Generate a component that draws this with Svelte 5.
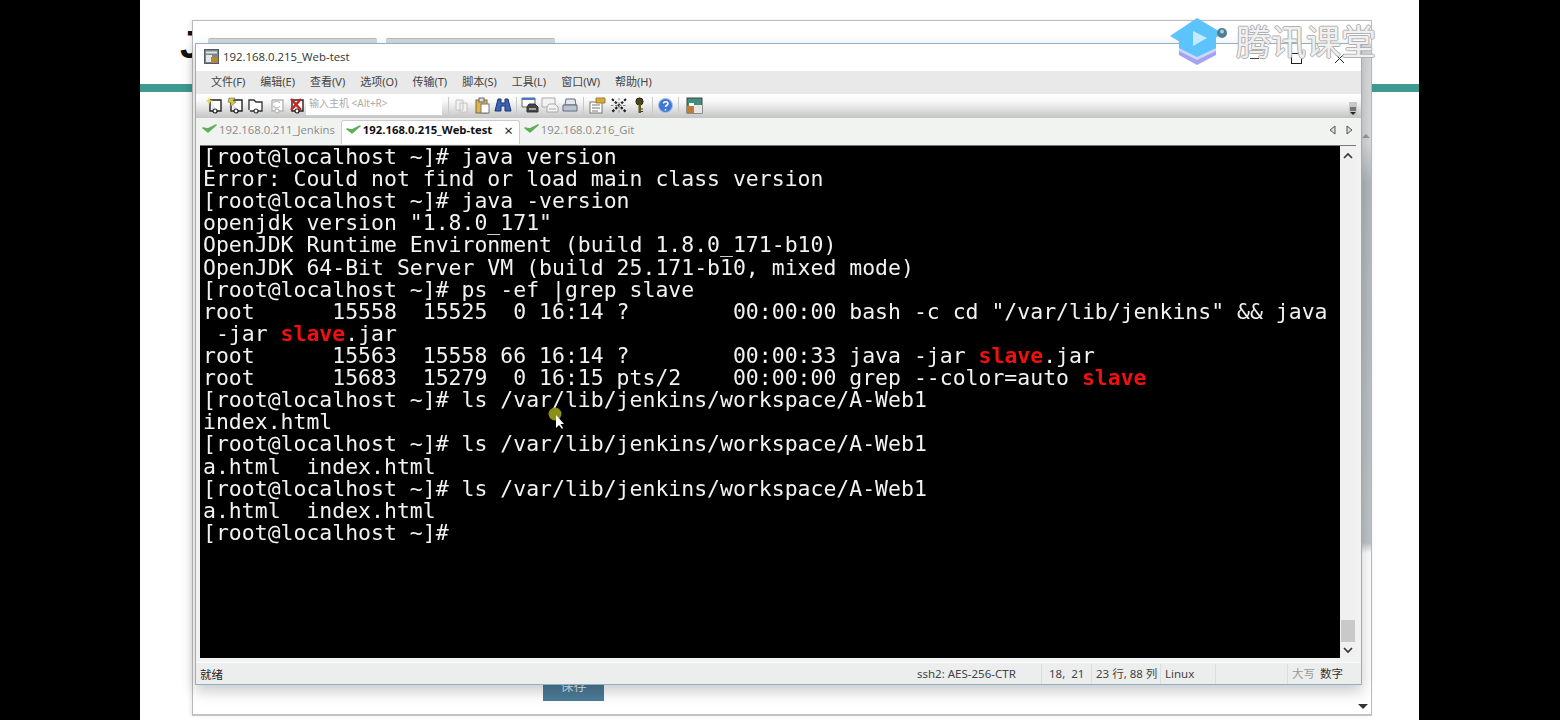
<script>
  const menus = ['文件(F)', '编辑(E)', '查看(V)', '选项(O)', '传输(T)', '脚本(S)', '工具(L)', '窗口(W)', '帮助(H)'];

  // terminal content, 'slave' is the grep match
  const lines = [
    ['[root@localhost ~]# java version'],
    ['Error: Could not find or load main class version'],
    ['[root@localhost ~]# java -version'],
    ['openjdk version "1.8.0_171"'],
    ['OpenJDK Runtime Environment (build 1.8.0_171-b10)'],
    ['OpenJDK 64-Bit Server VM (build 25.171-b10, mixed mode)'],
    ['[root@localhost ~]# ps -ef |grep slave'],
    ['root      15558  15525  0 16:14 ?        00:00:00 bash -c cd "/var/lib/jenkins" && java'],
    [' -jar ', 'slave', '.jar'],
    ['root      15563  15558 66 16:14 ?        00:00:33 java -jar ', 'slave', '.jar'],
    ['root      15683  15279  0 16:15 pts/2    00:00:00 grep --color=auto ', 'slave'],
    ['[root@localhost ~]# ls /var/lib/jenkins/workspace/A-Web1'],
    ['index.html'],
    ['[root@localhost ~]# ls /var/lib/jenkins/workspace/A-Web1'],
    ['a.html  index.html'],
    ['[root@localhost ~]# ls /var/lib/jenkins/workspace/A-Web1'],
    ['a.html  index.html'],
    ['[root@localhost ~]#']
  ];

  function isMatch(line, part) {
    return part === 'slave' && line.length > 1;
  }
</script>

{#snippet check()}
  <svg class="check" width="15" height="10" viewBox="0 0 15 10"><path d="M1 4l5 4 8-7-8 4z" fill="#5fae5a" stroke="#5fae5a" stroke-width="1.6" stroke-linejoin="round"/></svg>
{/snippet}

{#snippet session(stroke)}
  <path d="M4 3h11v11h-4M7 14H4V3" fill="#fff" stroke={stroke} stroke-width="1.4"/>
  <circle cx="9" cy="14" r="2" fill="#fff" stroke={stroke} stroke-width="1.2"/>
{/snippet}

<div class="screen">
  <div class="page">
    <div class="teal"></div>
    <span class="big-j">J</span>

    <section class="back-window">
      <div class="back-tabs"><i></i><i></i></div>
      <div class="back-rail"><span class="up"></span><span class="down"></span></div>
    </section>
    <div class="save">保存</div>

    <section class="window">
      <header class="titlebar">
        <svg width="15" height="15" viewBox="0 0 15 15"><rect x="0.500" y="0.500" width="14" height="14" fill="#7f838c" stroke="#565a62"/><rect x="2" y="2.500" width="11" height="2" fill="#dfe3ea"/><rect x="2" y="6" width="6" height="7" fill="#e8e8e8"/><rect x="7" y="8" width="6.500" height="5.500" fill="#b98a2c"/></svg>
        <span class="title">192.168.0.215_Web-test</span>
        <div class="controls">
          <span class="min"></span>
          <span class="max"></span>
          <svg width="11" height="11" viewBox="0 0 11 11"><path d="M1 1l9 9M10 1l-9 9" stroke="#222" fill="none"/></svg>
        </div>
      </header>

      <nav class="menubar">
        {#each menus as m}<span>{m}</span>{/each}
      </nav>

      <div class="toolbar">
        <div class="tools first">
          <svg width="17" height="17" viewBox="0 0 17 17">{@render session('#222')}<path d="M3 0l1 3 3 1-3 1-1 3-1-3-3-1 3-1z" fill="#e6d64a"/></svg>
          <svg width="17" height="17" viewBox="0 0 17 17">{@render session('#222')}<path d="M2 1h6L6 4l3 1-6 5 1-4-3-1z" fill="#d9c83a" stroke="#555" stroke-width="0.500"/></svg>
          <svg width="17" height="17" viewBox="0 0 17 17"><path d="M2 13V3h5l2 2h6v9h-4M7 14H3" fill="#fff" stroke="#333" stroke-width="1.300"/><circle cx="9" cy="14" r="2" fill="#fff" stroke="#333" stroke-width="1.200"/></svg>
          <svg width="17" height="17" viewBox="0 0 17 17">{@render session('#b5b5b5')}<path d="M5 6c2-3 6-2 7 0M12 9c-2 3-6 2-7 0" fill="none" stroke="#c4c4c4" stroke-width="1.300"/></svg>
          <svg width="17" height="17" viewBox="0 0 17 17">{@render session('#222')}<path d="M3 2l10 11M13 2L3 13" stroke="#c8231c" stroke-width="2.600"/></svg>
        </div>
        <div class="host">输入主机 &lt;Alt+R&gt;</div>
        <i class="sep"></i>
        <div class="tools">
          <svg width="17" height="17" viewBox="0 0 17 17"><path d="M3 3h7v10H3zM7 6h7v9H7z" fill="#f1f1f1" stroke="#c4c4c4"/></svg>
          <svg width="17" height="17" viewBox="0 0 17 17"><rect x="2" y="3" width="11" height="13" fill="#e0b44c" stroke="#7c6a30"/><rect x="5" y="1" width="5" height="4" fill="#ddd" stroke="#666"/><rect x="7" y="7" width="8" height="9" fill="#fff" stroke="#777"/></svg>
          <svg width="18" height="17" viewBox="0 0 18 17" fill="#3d63b5" stroke="#1d3270"><path d="M4 2h3v4h4V2h3l3 12h-6V9H7v5H1z"/></svg>
        </div>
        <i class="sep"></i>
        <div class="tools tight">
          <svg width="18" height="17" viewBox="0 0 18 17" fill="#fff" stroke="#333"><path d="M1 1h13v9H1z" stroke="#666"/><path d="M1 1h13v2H1z" fill="#4b79c6" stroke="none"/><path d="M8 7h6l3 3v5H6v-5z" fill="#444"/><path d="M8 12h7" stroke="#fff"/></svg>
          <svg width="18" height="17" viewBox="0 0 18 17" fill="#f3f3f3" stroke="#aaa"><path d="M1 1h13v9H1z"/><path d="M8 7h6l3 3v5H6v-5z"/><path d="M8 12h7"/></svg>
          <svg width="18" height="17" viewBox="0 0 18 17" fill="#dfe6ee" stroke="#667"><path d="M5 2h9l1 6H4z"/><path d="M2 8h14v6H2z" fill="#b8c4d2"/></svg>
        </div>
        <i class="sep"></i>
        <div class="tools">
          <svg width="18" height="17" viewBox="0 0 18 17"><rect x="2" y="5" width="12" height="11" fill="#fff" stroke="#777"/><path d="M4 8h8M4 11h8M4 14h6" stroke="#777"/><path d="M8 1h9v5H8z" fill="#d8a93c" stroke="#a08030"/></svg>
          <svg width="18" height="17" viewBox="0 0 18 17" stroke="#222" stroke-width="2.200" fill="none" stroke-dasharray="2.500 1.500"><path d="M2 2l14 13M16 2L2 15"/><path d="M9 1v15M1 8.500h16" stroke="#888" stroke-width="1"/></svg>
          <svg width="17" height="17" viewBox="0 0 17 17"><circle cx="8.500" cy="4.500" r="3.600" fill="#4c4a10" stroke="#222"/><path d="M7.500 7h2.500v9H7.500z" fill="#5d5a14"/><path d="M10 12h2M10 14.500h2" stroke="#333"/></svg>
        </div>
        <i class="sep"></i>
        <svg class="tool-solo" width="17" height="17" viewBox="0 0 17 17"><circle cx="8.500" cy="8.500" r="7" fill="#3f77d2" stroke="#a9c2ec"/><path d="M6.500 6.500c0-2.500 4.500-2.500 4.500 0 0 2-2.500 1.500-2.500 3.500M8.500 12v1.500" stroke="#fff" stroke-width="1.500" fill="none"/></svg>
        <i class="sep"></i>
        <svg class="tool-solo last" width="17" height="17" viewBox="0 0 17 17"><rect x="1" y="1" width="15" height="15" fill="#3f8f7c" stroke="#444"/><rect x="1" y="9" width="7" height="7" fill="#c17a3a"/><rect x="8" y="8" width="8" height="8" fill="#e6e6e6"/><rect x="3" y="6" width="5" height="3" fill="#fff"/></svg>
        <svg class="grip" width="8" height="14" viewBox="0 0 8 14"><path d="M1 6h6M1 8h6" stroke="#222"/><path d="M1 10h6l-3 3z" fill="#222"/></svg>
      </div>

      <div class="tabs">
        <div class="tab">{@render check()}192.168.0.211_Jenkins</div>
        <div class="tab active">{@render check()}192.168.0.215_Web-test<span class="tab-x">×</span></div>
        <div class="tab">{@render check()}192.168.0.216_Git</div>
        <div class="tab-nav">
          <svg width="7" height="10" viewBox="0 0 7 10"><path d="M6 1v8L1 5z" fill="#ddd" stroke="#555"/></svg>
          <svg width="7" height="10" viewBox="0 0 7 10"><path d="M1 1v8l5-4z" fill="#ddd" stroke="#555"/></svg>
        </div>
      </div>

      <div class="term-wrap">
        <pre class="term">{#each lines as line}<div class="ln">{#each line as part}{#if isMatch(line, part)}<b>{part}</b>{:else}{part}{/if}{/each}</div>{/each}</pre>
        <div class="scroll">
          <svg width="10" height="7" viewBox="0 0 10 7"><path d="M1 6l4-4 4 4" fill="none" stroke="#333" stroke-width="1.600"/></svg>
          <span class="thumb"></span>
          <svg width="10" height="7" viewBox="0 0 10 7"><path d="M1 1l4 4 4-4" fill="none" stroke="#333" stroke-width="1.600"/></svg>
        </div>
      </div>

      <footer class="status">
        <span class="ready">就绪</span>
        <span class="cell cipher">ssh2: AES-256-CTR</span>
        <span class="cell pos">18,&nbsp;&nbsp;21</span>
        <span class="cell size">23 行, 88 列</span>
        <span class="cell os">Linux</span>
        <span class="cell empty"></span>
        <span class="cell caps">大写</span>
        <span class="cell num">数字</span>
      </footer>
    </section>

    <!-- presenter's pointer from the recording -->
    <div class="pointer">
      <svg width="16" height="22" viewBox="0 0 16 22"><circle cx="7" cy="7" r="6.500" fill="#8d8e14"/><path d="M8 8v13l3-3 3 4 1-1-2.500-4H16z" fill="#fff"/></svg>
    </div>

    <div class="brand">
      <svg width="60" height="50" viewBox="0 0 60 50">
        <path d="M9 30v8l18 10 19-10v-8z" fill="#a3a3f2"/>
        <path d="M9 20v11l18 10 19-10V20z" fill="#5cc4fa"/>
        <path d="M9 31l18 9 19-9v3L27 43 9 34z" fill="#cfd6fb"/>
        <path d="M0 19L27 1l25 15-25 19z" fill="#5cc4fa"/>
        <path d="M23 14l14 7-14 8z" fill="#c4ebfc"/>
        <circle cx="52" cy="16" r="5" fill="#4d7f92"/>
        <circle cx="52" cy="14.500" r="2" fill="#a9cfdc"/>
      </svg>
      <span>腾讯课堂</span>
    </div>
  </div>
</div>

<style>
  :global(body) {
    margin: 0;
    background: #000;
  }

  .screen {
    width: 1560px;
    height: 720px;
    background: #000;
    padding-left: 140px;
    box-sizing: border-box;
    overflow: hidden;
    font-family: "Noto Sans", "Noto Sans CJK SC", sans-serif;
  }

  .page {
    position: relative;
    width: 1279px;
    height: 720px;
    background: #fff;
    padding-top: 84px;
    box-sizing: border-box;
  }

  .teal {
    height: 8px;
    background: #3f9a92;
  }

  .big-j {
    position: absolute;
    left: 40px;
    top: 24px;
    font: bold 38px "Liberation Sans", sans-serif;
    color: #111;
  }

  .back-window {
    position: absolute;
    left: 52px;
    top: 20px;
    width: 1180px;
    height: 696px;
    box-sizing: border-box;
    background: #fff;
    border: 1px solid #bbb;
    border-bottom: 2px solid #c4c4c4;
    box-shadow: -2px 0 4px rgba(0, 0, 0, 0.08);
  }

  .back-tabs {
    display: flex;
    gap: 9px;
    margin: 17px 0 0 15px;
  }

  .back-tabs i {
    width: 169px;
    height: 5px;
    background: #d4d8d6;
    border-radius: 2px 2px 0 0;
    border-top: 1px solid #bbb;
    box-sizing: border-box;
  }

  .back-rail {
    position: absolute;
    right: 0;
    top: 22px;
    bottom: 0;
    width: 11px;
    background: linear-gradient(#d8dadb 0 100px, #b4b8bb 140px, #c2c5c7 500px, #fff 510px);
  }

  .back-rail .up {
    position: absolute;
    left: 2px;
    top: 87px;
    border: 4px solid transparent;
    border-bottom: 4px solid #999;
  }

  .back-rail .down {
    position: absolute;
    left: -2px;
    bottom: 5px;
    border: 5px solid transparent;
    border-top: 5px solid #333;
    border-bottom: 0;
  }

  .save {
    position: absolute;
    left: 403px;
    top: 672px;
    width: 61px;
    height: 29px;
    background: #4d7b98;
    color: #dbe5ec;
    font-size: 13px;
    text-align: center;
    line-height: 26px;
  }

  .window {
    position: absolute;
    left: 55px;
    top: 43px;
    width: 1167px;
    height: 642px;
    box-sizing: border-box;
    display: flex;
    flex-direction: column;
    background: #f1f3f2;
    border: 1px solid #8fb1c6;
    box-shadow: 0 6px 14px rgba(0, 0, 0, 0.22);
  }

  .titlebar {
    height: 27px;
    flex: none;
    display: flex;
    align-items: center;
    gap: 4px;
    padding: 0 0 2px 8px;
    box-sizing: border-box;
    background: #fff;
    font-size: 11px;
    color: #333;
  }

  .title {
    font-family: "Open Sans", sans-serif;
    font-size: 11.400px;
  }

  .controls {
    margin-left: auto;
    margin-right: 16px;
    display: flex;
    align-items: center;
    gap: 32px;
    padding-top: 3px;
  }

  .min {
    width: 9px;
    border-top: 1px solid #444;
  }

  .max {
    width: 9px;
    height: 9px;
    border: 1px solid #222;
  }

  .menubar {
    height: 23px;
    flex: none;
    box-sizing: border-box;
    display: flex;
    align-items: center;
    gap: 15px;
    padding: 0 0 3px 15px;
    background: #e8e9e8;
    font-size: 11px;
    color: #444;
  }

  .toolbar {
    height: 24px;
    flex: none;
    box-sizing: border-box;
    display: flex;
    align-items: center;
    padding: 0 0 2px 10px;
    background: linear-gradient(#fff 0, #f8f8f8 30%, #c4c5c4 100%);
  }

  .tools {
    display: flex;
    align-items: center;
    gap: 3.500px;
  }

  .tools.tight {
    gap: 2px;
  }

  .tools.first {
    width: 100px;
    flex: none;
  }

  .host {
    width: 136px;
    height: 20px;
    flex: none;
    box-sizing: border-box;
    padding-left: 3px;
    background: #fff;
    color: #aaa;
    font-size: 10px;
    line-height: 17px;
  }

  .sep {
    width: 1px;
    height: 16px;
    margin: 0 4px;
    background: #c9c9c9;
    flex: none;
  }

  .host + .sep {
    margin-left: 6px;
  }

  .tool-solo.last {
    margin-left: 3px;
  }

  .grip {
    margin-left: auto;
    margin-right: 4px;
    align-self: flex-end;
    background: #c6c7c6;
  }

  .tabs {
    height: 26px;
    flex: none;
    display: flex;
    align-items: flex-end;
    padding-left: 6px;
    background: #f1f3f1;
    font-family: "Open Sans", sans-serif;
    font-size: 11.300px;
    color: #8a8a8a;
  }

  .tab {
    height: 24px;
    box-sizing: border-box;
    display: flex;
    align-items: center;
    gap: 2px;
    padding: 0 6px 6px 0;
    white-space: nowrap;
  }

  .tab.active {
    width: 179px;
    padding: 0 0 6px 4px;
    margin-right: 4px;
    background: #fff;
    border: 1px solid #ccc;
    border-bottom: 0;
    border-radius: 3px 3px 0 0;
    color: #111;
    font-weight: 700;
  }

  .tab-x {
    margin-left: auto;
    margin-right: 6px;
    font-size: 15px;
    font-weight: 400;
  }

  .tab-nav {
    margin-left: auto;
    margin-right: 8px;
    align-self: center;
    display: flex;
    gap: 10px;
    transform: translateY(-1px);
  }

  .term-wrap {
    margin: 1px 5px 0 4px;
    height: 513px;
    flex: none;
    display: flex;
    box-sizing: border-box;
    border-top: 1px solid #777;
  }

  .term {
    flex: 1;
    margin: 0;
    padding: 0 0 0 3px;
    background: #000;
    color: #f2f2f2;
    font-family: "DejaVu Sans Mono", monospace;
    font-size: 21.470px;
    line-height: 22.120px;
    filter: blur(0.3px);
  }

  .ln {
    height: 22.120px;
  }

  .term b {
    color: #f01010;
  }

  .scroll {
    width: 16px;
    flex: none;
    display: flex;
    flex-direction: column;
    align-items: center;
    padding: 6px 0 4px;
    box-sizing: border-box;
    background: #f0f0f0;
  }

  .thumb {
    width: 14px;
    height: 22px;
    margin: auto 0 5px;
    background: #c9c9c9;
  }

  .status {
    flex: 1;
    margin-top: 4px;
    display: flex;
    align-items: center;
    background: #eceeee;
    border-top: 1px solid #fafafa;
    font-size: 11.500px;
    color: #444;
  }

  .ready {
    width: 721px;
    padding-left: 4px;
    flex: none;
    box-sizing: border-box;
    color: #222;
  }

  .cell {
    height: 20px;
    line-height: 20px;
    flex: none;
    box-sizing: border-box;
    white-space: nowrap;
    border-left: 1px solid #dcdede;
  }

  .cipher {
    width: 124px;
    border-left: 0;
  }

  .pos {
    width: 50px;
    padding-left: 7px;
  }

  .size {
    width: 69px;
    padding-left: 4px;
  }

  .os {
    width: 55px;
    padding-left: 4px;
  }

  .empty {
    width: 72px;
  }

  .caps {
    width: 28px;
    padding-left: 4px;
    color: #999;
  }

  .num {
    width: 30px;
    padding-left: 5px;
    border-left: 0;
    color: #333;
  }

  .pointer {
    position: absolute;
    left: 408px;
    top: 407px;
    line-height: 0;
  }

  .brand {
    position: absolute;
    left: 1030px;
    top: 17px;
    display: flex;
    align-items: center;
    gap: 6px;
  }

  .brand span {
    font-size: 35px;
    line-height: 1;
    color: rgba(255, 255, 255, 0.82);
    margin-top: -2px;
    text-shadow: -1px 0 #b0b0b0, 1px 0 #b0b0b0, 0 -1px #b0b0b0, 0 1px #b0b0b0;
  }
</style>
